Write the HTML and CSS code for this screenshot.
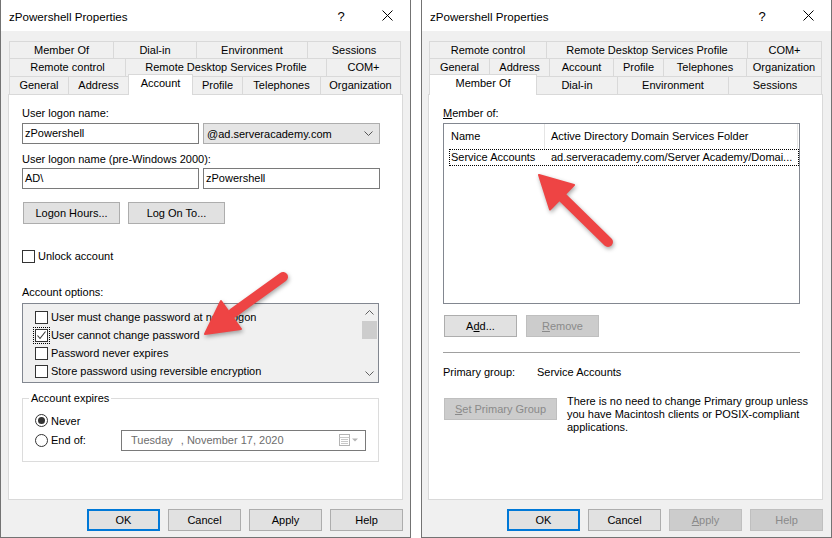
FILE: index.html
```html
<!DOCTYPE html>
<html>
<head>
<meta charset="utf-8">
<link rel="stylesheet" href="styles.css">
</head>
<body>
<div class="screen">
  <div class="dialog dlg-left">
    <div class="titlebar">
      <span class="title">zPowershell Properties</span>
      <span class="tb-btn help">?</span>
      <span class="tb-btn"><svg width="11" height="11" viewBox="0 0 11 11"><path d="M0.5 0.5L10.5 10.5M10.5 0.5L0.5 10.5" stroke="#000" stroke-width="1" fill="none"/></svg></span>
    </div>
    <div class="body">
      <div class="tabs">
        <div class="tabrow r1">
          <div class="tab t-member">Member Of</div>
          <div class="tab t-dialin">Dial-in</div>
          <div class="tab t-env">Environment</div>
          <div class="tab t-sessions last">Sessions</div>
        </div>
        <div class="tabrow">
          <div class="tab t-remote">Remote control</div>
          <div class="tab t-rdsp">Remote Desktop Services Profile</div>
          <div class="tab t-com last">COM+</div>
        </div>
        <div class="tabrow bottom">
          <div class="tab t-general">General</div>
          <div class="tab t-address">Address</div>
          <div class="tab t-account sel">Account</div>
          <div class="tab t-profile">Profile</div>
          <div class="tab t-phones">Telephones</div>
          <div class="tab t-org last">Organization</div>
        </div>
      </div>
      <div class="panel acct">
        <div class="lbl">User logon name:</div>
        <div class="field-row">
          <div class="input">zPowershell</div>
          <div class="combo"><span>@ad.serveracademy.com</span><svg width="9" height="5" viewBox="0 0 9 5"><path d="M0.5 0.5L4.5 4.5L8.5 0.5" stroke="#555" fill="none"/></svg></div>
        </div>
        <div class="lbl lbl2">User logon name (pre-Windows 2000):</div>
        <div class="field-row fr2">
          <div class="input">AD\</div>
          <div class="input">zPowershell</div>
        </div>
        <div class="btn-row">
          <div class="btn wide">Logon Hours...</div>
          <div class="btn wide">Log On To...</div>
        </div>
        <div class="check-row unlock"><span class="cb"></span>Unlock account</div>
        <div class="lbl opts">Account options:</div>
        <div class="listbox">
          <div class="items">
            <div class="item"><span class="cb"></span>User must change password at next logon</div>
            <div class="item"><span class="cb checked"><svg width="11" height="11" viewBox="0 0 11 11"><path d="M1.5 5.5L4 8.5L9.5 1.5" stroke="#333" stroke-width="1.1" fill="none"/></svg></span>User cannot change password</div>
            <div class="item"><span class="cb"></span>Password never expires</div>
            <div class="item"><span class="cb"></span>Store password using reversible encryption</div>
          </div>
          <div class="vscroll">
            <div class="sb-btn"><svg width="9" height="5" viewBox="0 0 9 5"><path d="M0.5 4.5L4.5 0.5L8.5 4.5" stroke="#606060" fill="none"/></svg></div>
            <div class="sb-track"><div class="sb-thumb"></div></div>
            <div class="sb-btn"><svg width="9" height="5" viewBox="0 0 9 5"><path d="M0.5 0.5L4.5 4.5L8.5 0.5" stroke="#606060" fill="none"/></svg></div>
          </div>
        </div>
        <fieldset class="group">
          <legend>Account expires</legend>
          <div class="radio-row first"><span class="radio on"></span>Never</div>
          <div class="radio-row"><span class="radio"></span><span>End of:</span>
            <div class="datepicker">
              <span class="dp-text">Tuesday<span class="dp-rest">, November 17, 2020</span></span>
              <span class="dp-icon">
                <svg width="20" height="12" viewBox="0 0 20 12"><rect x="0.5" y="0.5" width="10" height="11" fill="#fff" stroke="#b4b4b4"/><path d="M0.5 3.5H10.5M2 5.5H9M2 7.5H9M2 9.5H9" stroke="#c8c8c8"/><path d="M13 4.5H19L16 7.5Z" fill="#b4b4b4"/></svg>
              </span>
            </div>
          </div>
        </fieldset>
      </div>
      <div class="footer">
        <div class="btn fbtn default">OK</div>
        <div class="btn fbtn">Cancel</div>
        <div class="btn fbtn">Apply</div>
        <div class="btn fbtn">Help</div>
      </div>
    </div>
  </div>

  <div class="dialog dlg-right">
    <div class="titlebar">
      <span class="title">zPowershell Properties</span>
      <span class="tb-btn help">?</span>
      <span class="tb-btn"><svg width="11" height="11" viewBox="0 0 11 11"><path d="M0.5 0.5L10.5 10.5M10.5 0.5L0.5 10.5" stroke="#000" stroke-width="1" fill="none"/></svg></span>
    </div>
    <div class="body">
      <div class="tabs">
        <div class="tabrow r1">
          <div class="tab t-remote">Remote control</div>
          <div class="tab t-rdsp">Remote Desktop Services Profile</div>
          <div class="tab t-com last">COM+</div>
        </div>
        <div class="tabrow">
          <div class="tab t-general">General</div>
          <div class="tab t-address">Address</div>
          <div class="tab t-account">Account</div>
          <div class="tab t-profile">Profile</div>
          <div class="tab t-phones">Telephones</div>
          <div class="tab t-org last">Organization</div>
        </div>
        <div class="tabrow bottom">
          <div class="tab t-member sel">Member Of</div>
          <div class="tab t-dialin">Dial-in</div>
          <div class="tab t-env">Environment</div>
          <div class="tab t-sessions last">Sessions</div>
        </div>
      </div>
      <div class="panel member">
        <div class="lbl"><u>M</u>ember of:</div>
        <div class="listview">
          <div class="lv-head">
            <div class="col1 hd">Name</div>
            <div class="col2 hd">Active Directory Domain Services Folder</div>
          </div>
          <div class="lv-row">
            <div class="col1">Service Accounts</div>
            <div class="col2">ad.serveracademy.com/Server Academy/Domai...</div>
          </div>
        </div>
        <div class="btn-row2">
          <div class="btn fbtn">A<u>d</u>d...</div>
          <div class="btn fbtn disabled"><u>R</u>emove</div>
        </div>
        <div class="sep"></div>
        <div class="pg-row"><span class="pg-label">Primary group:</span><span>Service Accounts</span></div>
        <div class="spg-row">
          <div class="btn spg disabled"><u>S</u>et Primary Group</div>
          <div class="note">There is no need to change Primary group unless<br>you have Macintosh clients or POSIX-compliant<br>applications.</div>
        </div>
      </div>
      <div class="footer">
        <div class="btn fbtn default">OK</div>
        <div class="btn fbtn">Cancel</div>
        <div class="btn fbtn disabled"><u>A</u>pply</div>
        <div class="btn fbtn disabled">Help</div>
      </div>
    </div>
  </div>

  <svg class="arrows" width="832" height="538" viewBox="0 0 832 538">
    <g fill="#ee4444" stroke="#ee4444">
      <line x1="283" y1="277" x2="233" y2="313" stroke-width="10" stroke-linecap="round"/>
      <polygon points="205,334 241,329 221,301" stroke-width="2" stroke-linejoin="round"/>
      <line x1="608" y1="242" x2="560" y2="195" stroke-width="10" stroke-linecap="round"/>
      <polygon points="539,175 574,185 550,209.5" stroke-width="2" stroke-linejoin="round"/>
    </g>
  </svg>
</div>
</body>
</html>
```

FILE: styles.css
```css
* { box-sizing: border-box; }

body {
  margin: 0;
  background: #fff;
  font-family: "Liberation Sans", Arial, sans-serif;
  font-size: 11px;
  color: #000;
}

.screen {
  position: relative;
  display: flex;
  gap: 10px;
  width: 832px;
  height: 538px;
  overflow: hidden;
}

.dialog {
  width: 411px;
  height: 538px;
  flex: none;
  background: #f0f0f0;
  border: 1px solid #737373;
  border-top: none;
  display: flex;
  flex-direction: column;
}

.titlebar {
  height: 31px;
  background: #fff;
  display: flex;
  align-items: center;
  flex: none;
}

.title {
  flex: 1;
  padding-left: 8px;
  font-size: 11.6px;
  padding-top: 1px;
}

.tb-btn {
  width: 46px;
  height: 31px;
  display: flex;
  align-items: center;
  justify-content: center;
}

.tb-btn.help {
  font-size: 13px;
  padding-top: 1px;
}

.body {
  padding: 10px 0 0 7px;
}

.dlg-right .body {
  padding-left: 6px;
}

/* ---------- tabs ---------- */
.tabs {
  margin-left: 1px;
}

.tabrow {
  display: flex;
  align-items: flex-end;
  height: 18px;
}

.tabrow.r1 {
  height: 17px;
}

.tab {
  height: 18px;
  border-top: 1px solid #d9d9d9;
  border-left: 1px solid #d9d9d9;
  text-align: center;
  line-height: 16px;
  white-space: nowrap;
  flex: none;
  background: #f0f0f0;
}

.r1 .tab {
  height: 17px;
}

.tab.last {
  border-right: 1px solid #d9d9d9;
}

.tab.sel {
  position: relative;
  z-index: 1;
  height: 21px;
  margin-bottom: -1px;
  background: #fff;
  border-right: 1px solid #d9d9d9;
  margin-right: -1px;
}

.dlg-left .t-member { width: 104px; }
.dlg-left .t-dialin { width: 83px; }
.dlg-left .t-env { width: 111px; }
.dlg-left .t-sessions { width: 94px; }
.dlg-left .t-remote { width: 116px; }
.dlg-left .t-rdsp { width: 201px; }
.dlg-left .t-com { width: 75px; }
.dlg-left .t-general { width: 59px; }
.dlg-left .t-address { width: 60px; }
.dlg-left .t-account { width: 65px; }
.dlg-left .t-profile { width: 50px; }
.dlg-left .t-phones { width: 78px; }
.dlg-left .t-org { width: 81px; }

.dlg-right .t-remote { width: 117px; }
.dlg-right .t-rdsp { width: 201px; }
.dlg-right .t-com { width: 75px; }
.dlg-right .t-general { width: 60px; }
.dlg-right .t-address { width: 60px; }
.dlg-right .t-account { width: 64px; }
.dlg-right .t-profile { width: 50px; }
.dlg-right .t-phones { width: 83px; }
.dlg-right .t-org { width: 76px; }
.dlg-right .t-member { width: 108px; }
.dlg-right .t-dialin { width: 81px; }
.dlg-right .t-env { width: 111px; }
.dlg-right .t-sessions { width: 94px; }

/* ---------- panel ---------- */
.panel {
  width: 395px;
  height: 406px;
  background: #fff;
  border: 1px solid #d9d9d9;
  padding: 12px 0 0 13px;
}

.panel.member {
  padding-left: 14px;
}

.lbl {
  line-height: 13px;
  height: 13px;
}

.lbl2 { margin-top: 9px; }
.opts { margin-top: 23px; }

.field-row {
  display: flex;
  gap: 4px;
  margin-top: 3px;
}

.field-row.fr2 { margin-top: 2px; }

.input {
  width: 177px;
  height: 21px;
  border: 1px solid #7a7a7a;
  background: #fff;
  padding-left: 2px;
  line-height: 19px;
}

.combo {
  width: 177px;
  height: 21px;
  border: 1px solid #adadad;
  background: #e5e5e5;
  display: flex;
  align-items: center;
  justify-content: space-between;
  padding: 0 6px 0 3px;
}

.btn {
  height: 22px;
  border: 1px solid #adadad;
  background: #e1e1e1;
  text-align: center;
  line-height: 20px;
  white-space: nowrap;
}

.btn.default {
  border: 2px solid #0078d7;
  line-height: 18px;
}

.btn.disabled {
  background: #cccccc;
  border-color: #bfbfbf;
  color: #8a8a8a;
}

.btn-row {
  display: flex;
  gap: 8px;
  margin: 13px 0 0 1px;
}

.btn.wide { width: 97px; }

.check-row {
  display: flex;
  align-items: center;
  gap: 3px;
  height: 13px;
  line-height: 13px;
}

.unlock { margin-top: 26px; }

.cb {
  width: 13px;
  height: 13px;
  flex: none;
  border: 1px solid #333;
  background: #fff;
  display: flex;
  align-items: center;
  justify-content: center;
}

.cb.checked {
  outline: 1px dotted #000;
  outline-offset: 1px;
}

/* ---------- listbox ---------- */
.listbox {
  margin-top: 4px;
  width: 357px;
  height: 80px;
  border: 1px solid #828790;
  background: #f0f0f0;
  display: flex;
}

.items {
  flex: 1;
  padding: 4px 0 0 12px;
}

.item {
  height: 18px;
  display: flex;
  align-items: center;
  gap: 3px;
  white-space: nowrap;
}

.vscroll {
  width: 17px;
  display: flex;
  flex-direction: column;
}

.sb-btn {
  height: 17px;
  display: flex;
  align-items: center;
  justify-content: center;
}

.sb-track {
  flex: 1;
  padding: 0 1px;
}

.sb-thumb {
  height: 18px;
  background: #cdcdcd;
}

/* ---------- group ---------- */
.group {
  margin: 9px 0 0 0;
  width: 357px;
  border: 1px solid #dcdcdc;
  padding: 0 12px 10px 12px;
  min-width: 0;
}

.group legend {
  margin-left: -6px;
  padding: 0 2px;
  line-height: 13px;
}

.radio-row {
  display: flex;
  align-items: center;
  gap: 3px;
  height: 22px;
  margin-top: 2px;
}

.radio-row.first {
  height: 13px;
  margin-top: 9px;
}

.radio {
  width: 13px;
  height: 13px;
  border: 1px solid #333;
  border-radius: 50%;
  background: #fff;
  flex: none;
  display: flex;
  align-items: center;
  justify-content: center;
}

.radio.on::after {
  content: "";
  width: 7px;
  height: 7px;
  border-radius: 50%;
  background: #333;
}

.datepicker {
  margin-left: auto;
  width: 245px;
  height: 21px;
  border: 1px solid #7a7a7a;
  background: #fff;
  display: flex;
  align-items: center;
  justify-content: space-between;
  padding: 0 6px 0 9px;
  color: #6d6d6d;
}

.dp-rest { margin-left: 8px; }

.dp-icon {
  display: flex;
  align-items: center;
}

/* ---------- footer ---------- */
.footer {
  width: 395px;
  display: flex;
  justify-content: flex-end;
  gap: 8px;
  margin-top: 9px;
}

.fbtn { width: 73px; }

/* ---------- member of ---------- */
.listview {
  margin-top: 3px;
  width: 357px;
  height: 181px;
  border: 1px solid #828790;
  background: #fff;
}

.lv-head {
  display: flex;
  height: 25px;
  line-height: 25px;
}

.lv-head .col1 {
  width: 101px;
  padding-left: 7px;
  border-right: 1px solid #e5e5e5;
}

.lv-head .col2 {
  width: 253px;
  padding-left: 6px;
  border-right: 1px solid #e5e5e5;
}

.lv-row {
  display: flex;
  margin-left: 5px;
  width: 350px;
  height: 17px;
  line-height: 15px;
  border: 1px dotted #000;
  white-space: nowrap;
}

.lv-row .col1 {
  width: 101px;
  padding-left: 1px;
}

.btn-row2 {
  display: flex;
  gap: 9px;
  margin: 11px 0 0 1px;
}

.sep {
  width: 357px;
  border-top: 1px solid #a0a0a0;
  margin-top: 15px;
}

.pg-row {
  margin-top: 13px;
  line-height: 13px;
  display: flex;
}

.pg-label { width: 94px; }

.spg-row {
  display: flex;
  margin-top: 16px;
  align-items: flex-start;
}

.btn.spg {
  width: 113px;
  margin: 3px 0 0 1px;
}

.note {
  margin-left: 10px;
  line-height: 13px;
}

/* ---------- annotation arrows ---------- */
.arrows {
  position: absolute;
  left: 0;
  top: 0;
  pointer-events: none;
  filter: drop-shadow(1px 2px 2px rgba(0, 0, 0, 0.35));
}
```
